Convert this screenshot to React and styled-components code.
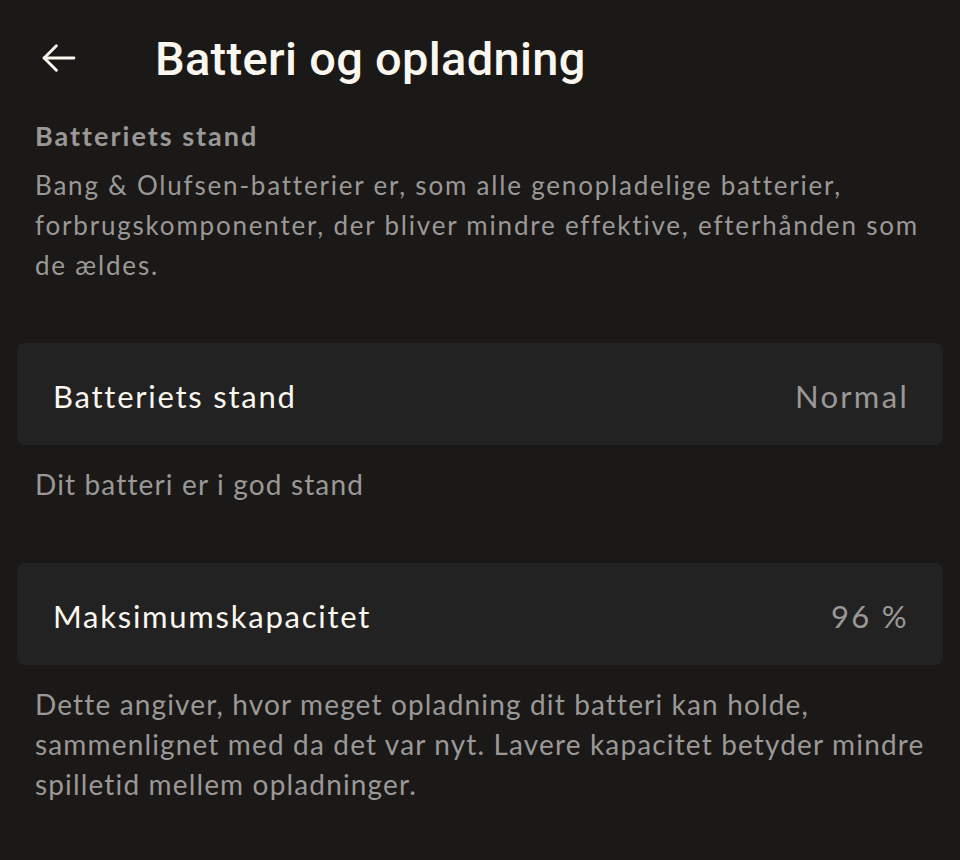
import styled, { createGlobalStyle } from "styled-components";

const Global = createGlobalStyle`
  html, body {
    margin: 0;
    background: #1a1918;
  }
  body {
    font-family: "Lato", "Noto Sans", sans-serif;
  }
`;

const Page = styled.div`
  width: 960px;
  height: 860px;
  background: #1a1918;
  overflow: hidden;
`;

const Header = styled.header`
  display: flex;
  align-items: center;
  height: 116px;
  padding: 0 0 0 37px;
  box-sizing: border-box;
`;

const BackButton = styled.button`
  display: flex;
  align-items: center;
  justify-content: center;
  width: 44px;
  height: 44px;
  padding: 0;
  margin: 0 74px 0 0;
  border: none;
  background: none;
  color: #fbf7ee;
`;

const Title = styled.h1`
  margin: 0;
  font-family: "Roboto", sans-serif;
  font-weight: 500;
  font-size: 47px;
  color: #fbf7ee;
  letter-spacing: 0.3px;
`;

const Content = styled.main`
  padding: 0 17px;
`;

const Intro = styled.section`
  padding: 0 0 58px 18px;
`;

const SectionHead = styled.h2`
  margin: 0 0 9px;
  font-family: "Lato", sans-serif;
  font-weight: 700;
  font-size: 27px;
  letter-spacing: 2px;
  line-height: 40px;
  color: #9b9896;
`;

const Text = styled.p`
  margin: 0;
  font-family: "Lato", sans-serif;
  font-size: 26px;
  letter-spacing: 1.8px;
  line-height: 40px;
  color: #9b9896;
`;

const Card = styled.div`
  display: flex;
  align-items: center;
  justify-content: space-between;
  height: 102px;
  padding: 3px 34px 0 36px;
  box-sizing: border-box;
  background: #232222;
  border-radius: 8px;
`;

const Label = styled.span`
  font-family: "Lato", sans-serif;
  font-size: 31px;
  letter-spacing: 1.75px;
  color: #fbf7ee;
`;

const Value = styled.span`
  font-family: "Lato", sans-serif;
  font-size: 31px;
  letter-spacing: 2.3px;
  color: #9b9896;
`;

const Note = styled.div`
  padding: 19px 0 ${(p) => p.$after || 0}px 18px;
`;

const NoteText = styled.p`
  margin: 0;
  font-family: "Lato", sans-serif;
  font-size: 28px;
  letter-spacing: 1.15px;
  line-height: 40px;
  color: #9b9896;
`;

const ArrowIcon = () => (
  <svg width="42" height="42" viewBox="0 0 24 24" fill="none" stroke="currentColor" strokeWidth="1.7" strokeLinecap="round" strokeLinejoin="round">
    <path d="M20.5 12H3.5" />
    <path d="M10.5 5l-7 7 7 7" />
  </svg>
);

export default function App() {
  return (
    <Page>
      <Global />
      <Header>
        <BackButton aria-label="Tilbage">
          <ArrowIcon />
        </BackButton>
        <Title>Batteri og opladning</Title>
      </Header>
      <Content>
        <Intro>
          <SectionHead>Batteriets stand</SectionHead>
          <Text>
            Bang &amp; Olufsen-batterier er, som alle genopladelige batterier,
            forbrugskomponenter, der bliver mindre effektive, efterhånden som
            de ældes.
          </Text>
        </Intro>
        <Card>
          <Label>Batteriets stand</Label>
          <Value>Normal</Value>
        </Card>
        <Note $after={59}>
          <NoteText>Dit batteri er i god stand</NoteText>
        </Note>
        <Card>
          <Label>Maksimumskapacitet</Label>
          <Value>96 %</Value>
        </Card>
        <Note>
          <NoteText>
            Dette angiver, hvor meget opladning dit batteri kan holde,
            sammenlignet med da det var nyt. Lavere kapacitet betyder mindre
            spilletid mellem opladninger.
          </NoteText>
        </Note>
      </Content>
    </Page>
  );
}
